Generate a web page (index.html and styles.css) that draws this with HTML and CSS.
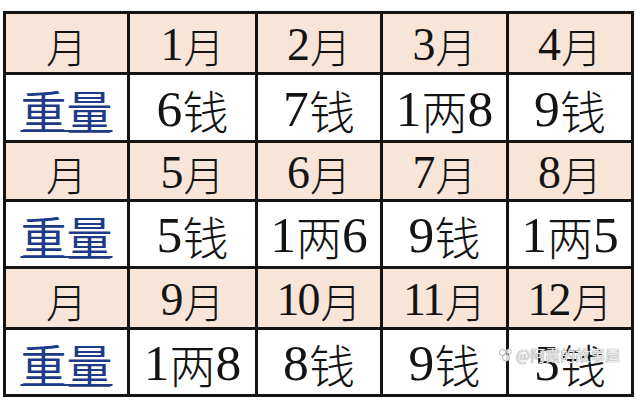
FILE: index.html
```html
<!DOCTYPE html>
<html lang="zh">
<head>
<meta charset="utf-8">
<link rel="stylesheet" href="styles.css">
</head>
<body>
<div class="page">
  <div class="sheet">
    <div class="cell m">月</div><div class="cell m"><span class="n">1</span>月</div><div class="cell m"><span class="n">2</span>月</div><div class="cell m"><span class="n">3</span>月</div><div class="cell m"><span class="n">4</span>月</div>
    <div class="cell w"><span class="lbl">重量</span></div><div class="cell w"><span class="n">6</span>钱</div><div class="cell w"><span class="n">7</span>钱</div><div class="cell w"><span class="n">1</span>两<span class="n">8</span></div><div class="cell w"><span class="n">9</span>钱</div>
    <div class="cell m">月</div><div class="cell m"><span class="n">5</span>月</div><div class="cell m"><span class="n">6</span>月</div><div class="cell m"><span class="n">7</span>月</div><div class="cell m"><span class="n">8</span>月</div>
    <div class="cell w"><span class="lbl">重量</span></div><div class="cell w"><span class="n">5</span>钱</div><div class="cell w"><span class="n">1</span>两<span class="n">6</span></div><div class="cell w"><span class="n">9</span>钱</div><div class="cell w"><span class="n">1</span>两<span class="n">5</span></div>
    <div class="cell m">月</div><div class="cell m"><span class="n">9</span>月</div><div class="cell m"><span class="n">10</span>月</div><div class="cell m"><span class="n">11</span>月</div><div class="cell m"><span class="n">12</span>月</div>
    <div class="cell w"><span class="lbl">重量</span></div><div class="cell w"><span class="n">1</span>两<span class="n">8</span></div><div class="cell w"><span class="n">8</span>钱</div><div class="cell w"><span class="n">9</span>钱</div><div class="cell w"><span class="n">5</span>钱</div>
  </div>
  <div class="wm">
    <svg class="wm-logo" width="16" height="14" viewBox="0 0 18 16"><circle cx="5" cy="5" r="3.5"/><circle cx="12" cy="4" r="3"/><circle cx="9" cy="11" r="4"/></svg>
    <span>@阿霞的故事屋</span>
  </div>
</div>
</body>
</html>
```
FILE: styles.css
```css
html, body {
  margin: 0;
  padding: 0;
  background: #ffffff;
}
.page {
  position: relative;
  width: 640px;
  height: 404px;
  padding: 11px 0 0 3px;
  box-sizing: border-box;
}
.sheet {
  display: grid;
  grid-template-columns: 121px 125px 122px 123px 122px;
  grid-template-rows: 58px 65px 56px 64px 58px 64px;
  gap: 3px;
  padding: 3px;
  background: #141414;
  width: max-content;
}
.cell {
  display: flex;
  align-items: center;
  justify-content: center;
  font-family: "Noto Sans CJK SC", sans-serif;
  color: #141414;
  font-weight: 300;
  line-height: 1;
}
.n {
  font-family: "Liberation Serif", serif;
  font-weight: 400;
  font-size: 1.12em;
  letter-spacing: -2px;
  margin-right: 2px;
}
.m {
  background: #f9e4d8;
  font-size: 41px;
  padding-top: 4px;
}
.w {
  background: #ffffff;
  font-size: 46px;
  padding-top: 2px;
}
.lbl {
  color: #1d3b86;
  font-weight: 400;
  font-size: 46px;
  text-decoration: underline;
  text-decoration-thickness: 2px;
  text-underline-offset: 1px;
}
.wm {
  position: absolute;
  left: 498px;
  top: 344px;
  display: flex;
  align-items: center;
  gap: 2px;
  font-family: "Noto Sans CJK SC", sans-serif;
  font-size: 15px;
  color: rgba(255, 255, 255, 0.85);
  text-shadow: 0 0 1px #8a8a8a, 0 0 1px #8a8a8a;
}
.wm-logo {
  fill: rgba(255, 255, 255, 0.85);
  stroke: #999;
  stroke-width: 0.8;
}
```
